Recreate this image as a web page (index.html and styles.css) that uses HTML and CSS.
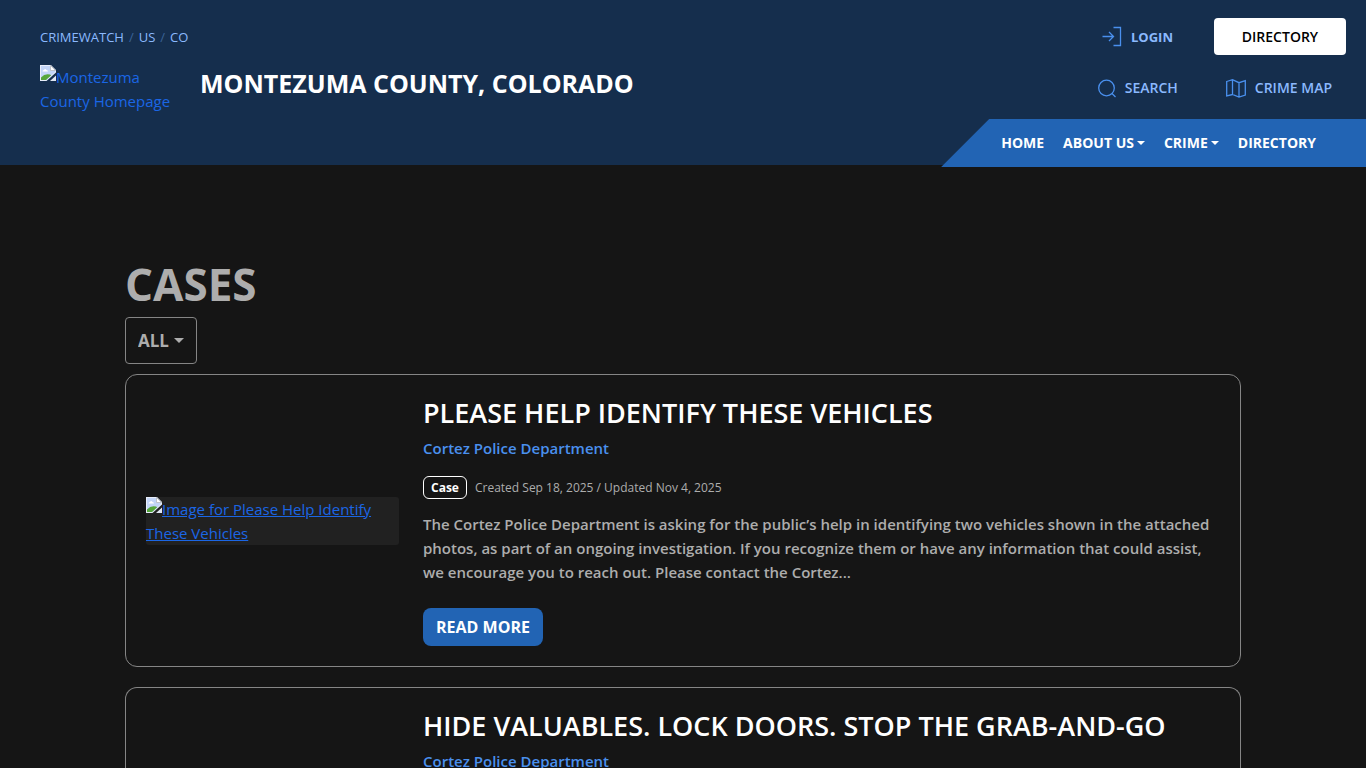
FILE: index.html
```html
<!DOCTYPE html>
<html lang="en">
<head>
<meta charset="utf-8">
<meta name="viewport" content="width=device-width, initial-scale=1">
<title>Cases - Montezuma County, Colorado</title>
<link rel="stylesheet" href="styles.css">
</head>
<body>
<svg class="defs" aria-hidden="true">
  <symbol id="missing" viewBox="0 0 16 16">
    <path d="M0 0h11l5 5v2.500L6.500 16H0z" fill="#e8eefa"/>
    <path d="M1 1h9v5h5v1L6.500 15H1z" fill="#c3d5f7"/>
    <path d="M2.500 6.500q0-1.500 1.500-1.500 1-2 2.500 0 1.500 0 1.500 1.500z" fill="#fff"/>
    <path d="M1 15v-2.500Q5 8 10 9.500l1.200.800L6 15z" fill="#55a63a"/>
    <path d="M10.500.500v5h5z" fill="#fff" stroke="#9a9fa8" stroke-width=".6"/>
    <path d="M16 10.500V16H10z" fill="#dfe6f2"/>
  </symbol>
</svg>
<header class="header">
  <div class="brand">
    <nav class="crumbs" aria-label="Breadcrumb">
      <a href="#">CRIMEWATCH</a><span>/</span><a href="#">US</a><span>/</span><a href="#">CO</a>
    </nav>
    <div class="identity">
      <a class="logo" href="#"><svg class="missing"><use href="#missing"/></svg>Montezuma County Homepage</a>
      <div class="site-name">MONTEZUMA COUNTY, COLORADO</div>
    </div>
  </div>
  <div class="tools">
    <div class="account">
      <a class="tool login" href="#">
        <svg width="20" height="20" viewBox="0 0 20 20"><path d="M.500 9.500h11M7 5l4.500 4.500L7 14M11.500.500H18.500v18h-7"/></svg>LOGIN</a>
      <a class="directory" href="#">DIRECTORY</a>
    </div>
    <div class="lookups">
      <a class="tool" href="#">
        <svg width="18" height="18" viewBox="0 0 18 18"><circle cx="8.500" cy="9" r="7.800"/><path d="M14 14.500l3.500 3.500"/></svg>SEARCH</a>
      <a class="tool" href="#">
        <svg width="20" height="18" viewBox="0 0 20 18"><path d="M.700 2.500l5.800-1.800 6.500 3 6.300-2V16l-6.300 2-6.500-2.500-5.800 1.500zM6.500.700v14.800M13 3.700V18"/></svg>CRIME MAP</a>
    </div>
    <nav class="menu" aria-label="Main">
      <a href="#">HOME</a>
      <button class="caret" type="button" aria-haspopup="true">ABOUT US</button>
      <button class="caret" type="button" aria-haspopup="true">CRIME</button>
      <a href="#">DIRECTORY</a>
    </nav>
  </div>
</header>
<main class="content">
  <h1>CASES</h1>
  <div class="filter caret">
    <select aria-label="Case type"><option>ALL</option></select>
  </div>
  <article class="card">
    <a class="thumb" href="#"><svg class="missing"><use href="#missing"/></svg>Image for Please Help Identify These Vehicles</a>
    <div class="details">
      <h2><a href="#">PLEASE HELP IDENTIFY THESE VEHICLES</a></h2>
      <a class="agency" href="#">Cortez Police Department</a>
      <div class="meta"><span class="badge">Case</span><span>Created Sep 18, 2025 / Updated Nov 4, 2025</span></div>
      <p>The Cortez Police Department is asking for the public’s help in identifying two vehicles shown in the attached photos, as part of an ongoing investigation. If you recognize them or have any information that could assist, we encourage you to reach out. Please contact the Cortez...</p>
      <a class="more" href="#">READ MORE</a>
    </div>
  </article>
  <article class="card">
    <div class="details offset">
      <h2><a href="#">HIDE VALUABLES. LOCK DOORS. STOP THE GRAB-AND-GO</a></h2>
      <a class="agency" href="#">Cortez Police Department</a>
    </div>
  </article>
</main>
</body>
</html>
```

FILE: styles.css
```css
* { box-sizing: border-box; }
html { scrollbar-width: none; }
body {
  margin: 0;
  background: #151515;
  color: #adadad;
  font: 15px/24px "Segoe UI", "Open Sans", "Noto Sans", sans-serif;
}
a { color: inherit; text-decoration: none; }
h1, h2, p { margin: 0; }
button, select { font: inherit; color: inherit; background: none; border: 0; padding: 0; margin: 0; }
.defs { position: absolute; width: 0; height: 0; }

.header {
  display: flex;
  justify-content: space-between;
  background: #152e4d;
}
.brand { padding: 25px 0 0 40px; }
.crumbs { display: flex; gap: 5px; font-size: 13px; color: #3a6296; }
.crumbs a { color: #8bb9fe; }
.identity { display: flex; gap: 20px; padding-top: 16px; }
.logo { width: 140px; color: #1b66e5; }
.missing { width: 16px; height: 16px; vertical-align: top; }
.site-name { color: #fff; font-size: 25px; font-weight: 700; line-height: 36px; }

.tools { display: flex; flex-direction: column; align-items: flex-end; margin-bottom: -2px; }
.account { display: flex; align-items: center; gap: 41px; padding: 18px 20px 21px 0; }
.directory {
  width: 132px;
  padding: 7px 0 6px;
  border-radius: 4px;
  background: #fff;
  color: #000;
  font-size: 14px;
  font-weight: 600;
  text-align: center;
}
.lookups { display: flex; gap: 48px; padding: 0 34px 19px 0; }
.tool {
  display: flex;
  align-items: center;
  gap: 9px;
  color: #8bb9fe;
  font-size: 14px;
  font-weight: 600;
}
.login { font-size: 13px; font-weight: 700; }
.tool svg { fill: none; stroke: #4a90ee; stroke-width: 1.3; overflow: visible; }
.menu {
  display: flex;
  gap: 19px;
  padding: 12px 50px 12px 60px;
  background: #2264b4;
  clip-path: polygon(48px 0, 100% 0, 100% 100%, 0 100%);
  color: #fff;
  font-size: 14px;
  font-weight: 700;
}
.caret { display: flex; align-items: center; gap: 3px; }
.caret::after {
  content: "";
  border: 4px solid transparent;
  border-top-color: currentColor;
  border-bottom: 0;
}

.content { max-width: 1140px; margin: 0 auto; padding: 94px 12px 0; }
h1 { font-size: 44px; font-weight: 700; line-height: 50px; }
.filter {
  position: relative;
  width: 72px;
  height: 47px;
  margin: 8px 0 10px;
  border: 1px solid #858585;
  border-radius: 4px;
  font-size: 17px;
  font-weight: 700;
}
.filter select { appearance: none; width: 100%; height: 100%; padding-left: 12px; }
.filter::after {
  position: absolute;
  right: 12px;
  border-width: 5px 5px 0;
  pointer-events: none;
}
.card {
  display: flex;
  align-items: center;
  gap: 24px;
  margin-bottom: 20px;
  padding: 20px;
  border: 1px solid #858585;
  border-radius: 12px;
}
.card:last-child { margin-bottom: 0; border-bottom: 0; border-radius: 12px 12px 0 0; padding-bottom: 0; }
.thumb {
  flex: 0 0 253px;
  border-radius: 3px;
  background: #212121;
  color: #1b66e5;
  text-decoration: underline;
}
.details { flex: 1; }
.offset { margin-left: 277px; }
h2 { color: #fff; font-size: 27px; font-weight: 600; line-height: 36px; }
.agency { display: block; margin: 5px 0 16px; color: #4a90ee; font-weight: 600; }
.meta { display: flex; align-items: center; gap: 8px; font-size: 12px; line-height: 23px; }
.badge {
  padding: 0 7px;
  border: 1px solid #fff;
  border-radius: 6px;
  color: #fff;
  font-weight: 700;
  line-height: 21px;
}
.details p { margin: 13px 0 24px; font-weight: 600; }
.more {
  display: inline-block;
  padding: 7px 13px;
  border-radius: 8px;
  background: #2264b4;
  color: #fff;
  font-size: 16px;
  font-weight: 700;
  vertical-align: top;
}
```
